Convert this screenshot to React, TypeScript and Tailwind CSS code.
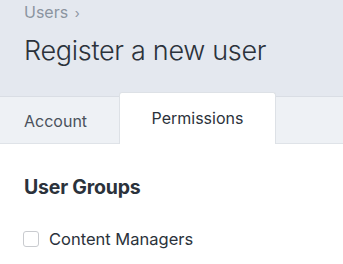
import React from 'react';

export default function App() {
  return (
    <div className="w-[343px] h-[264px] overflow-hidden bg-white font-['Inter',sans-serif]">
      {/* Page header */}
      <div className="h-[97px] bg-[#e4e8ef] border-b border-[#d9dde4] px-6">
        <div className="pt-[2px] text-[16px] leading-5 text-[#8b949f]">
          Users <span className="text-[13px] ml-0.5">›</span>
        </div>
        <h1 className="mt-[12px] text-[27px] leading-8 font-light tracking-[-0.3px] text-[#2b323b]">
          Register a new user
        </h1>
      </div>

      {/* Tabs */}
      <div className="h-[47px] bg-[#eef1f5] border-b border-[#dfe3e8] flex items-end px-6">
        <div className="w-[95px] h-full flex items-center pt-[2px] text-[16px] text-[#4a525c]">Account</div>
        <div className="-mt-[5px] h-[52px] -mb-px w-[157px] bg-white border border-b-0 border-[#dde1e6] rounded-t-[3px] flex items-center justify-center text-[16px] text-[#2b323b] pb-[2px]">
          Permissions
        </div>
      </div>

      {/* Content */}
      <div className="px-6 pt-[33px]">
        <h2 className="text-[19.5px] leading-5 font-bold tracking-[-0.2px] text-[#2b323b]">User Groups</h2>
        <label className="mt-[32px] flex items-center gap-[10px] -ml-px">
          <span className="w-[16px] h-[16px] rounded-[3px] border border-[#c9cbcf] bg-white" />
          <span className="text-[16.5px] leading-5 text-[#2b323b]">Content Managers</span>
        </label>
      </div>
    </div>
  );
}
